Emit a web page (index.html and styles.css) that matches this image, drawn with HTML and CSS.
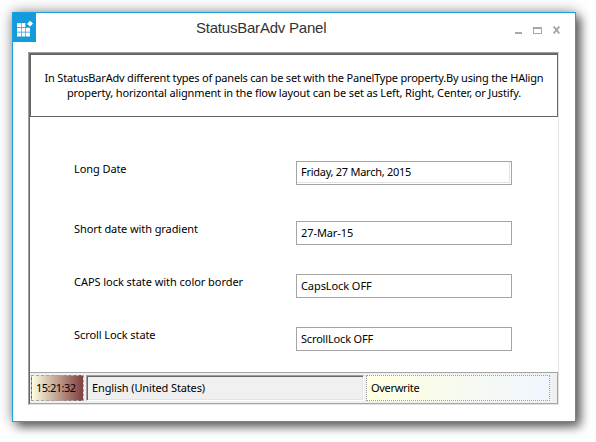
FILE: index.html
```html
<!DOCTYPE html>
<html lang="en">
<head>
<meta charset="utf-8">
<title>StatusBarAdv Panel</title>
<link rel="stylesheet" href="styles.css">
</head>
<body>
<main class="window">
  <header class="titlebar">
    <div class="app-icon">
      <svg width="23" height="29" viewBox="0 0 23 29" fill="#fff">
        <path d="M4 10h4v4H4zM8.600 10h3.800v4H8.600zM4 14.700h4v4H4zM8.600 14.700h3.800v4H8.600zM13 14.700h4v4h-4zM4 19.400h4v4H4zM8.600 19.400h3.800v4H8.600zM13 19.400h4v4h-4z"/>
        <path d="M17 7.700l3 2.700-2.700 3-3.300-2.400z"/>
      </svg>
    </div>
    <h1 class="title">StatusBarAdv Panel</h1>
    <svg class="controls" width="48" height="12" viewBox="0 0 48 12">
      <path d="M0 6h7v2H0z" fill="#a8a8a8"/>
      <path d="M18 1h9v7h-9zM19 3v4h7V3z" fill="#a8a8a8" fill-rule="evenodd"/>
      <path d="M38.700 0.500l5.600 7M44.300 0.500l-5.600 7" stroke="#a5a5a5" stroke-width="2"/>
    </svg>
  </header>
  <section class="panel">
    <div class="intro">
      <p class="line-one">In StatusBarAdv different types of panels can be set with the PanelType property.By using the HAlign</p>
      <p class="line-two">property, horizontal alignment in the flow layout can be set as Left, Right, Center, or Justify.</p>
    </div>
    <div class="form">
      <div class="row first"><span class="label">Long Date</span><div class="field inset"><span class="long-date">Friday, 27 March, 2015</span></div></div>
      <div class="row"><span class="label">Short date with gradient</span><div class="field"><span>27-Mar-15</span></div></div>
      <div class="row"><span class="label caps">CAPS lock state with color border</span><div class="field"><span>CapsLock OFF</span></div></div>
      <div class="row"><span class="label">Scroll Lock state</span><div class="field"><span class="scroll-lock">ScrollLock OFF</span></div></div>
    </div>
    <footer class="statusbar">
      <div class="cell time"><span>15:21:32</span></div>
      <div class="cell language"><span>English (United States)</span></div>
      <div class="cell mode"><span>Overwrite</span></div>
    </footer>
  </section>
</main>
</body>
</html>
```
FILE: styles.css
```css
* { box-sizing: border-box; }
body {
  margin: 0;
  padding: 12px;
  height: 442px;
  overflow: hidden;
  background: #fff;
  color: #000;
  font: 11px/15px "Noto Sans", "Open Sans", sans-serif;
}
p, h1 { margin: 0; }
.window {
  width: 564px;
  height: 410px;
  border: 1px solid #1ba1e2;
  background: #fff;
  box-shadow: 5px 5px 9px rgba(0,0,0,.5), 0 0 13px rgba(0,0,0,.42);
}
.titlebar {
  display: grid;
  grid-template-columns: 23px 1fr 63px;
  height: 39px;
}
.app-icon {
  height: 29px;
  background: #149bdb;
}
.title {
  padding: 6px 0 0 160px;
  font: 15px/18px "Liberation Sans", Arial, sans-serif;
  letter-spacing: -.22px;
  color: #333;
}
.controls { margin: 13px 0 0 3px; }
.panel {
  display: flex;
  flex-direction: column;
  width: 531px;
  height: 353px;
  margin-left: 15px;
  border: 1px solid #a0a0a0;
  border-right-color: #e3e3e3;
  border-bottom-color: #e3e3e3;
  box-shadow: inset 1px 1px #696969;
  padding: 1px 0 0 1px;
}
.intro {
  flex: none;
  height: 63px;
  padding-top: 15px;
  border: 1px solid #646464;
  text-align: center;
  white-space: nowrap;
}
.line-one { letter-spacing: -.2px; }
.line-two { letter-spacing: -.14px; }
.form {
  flex: 1;
  min-height: 0;
  padding: 44px 0 0 44px;
  letter-spacing: -.08px;
}
.caps { letter-spacing: -.05px; }
.row {
  display: grid;
  grid-template-columns: 222px 216px;
  height: 53px;
}
.row.first { height: 60px; }
.field {
  height: 24px;
  padding: 3px 4px;
  border: 1px solid #a5a5a5;
}
.inset { box-shadow: inset -1px -1px #fff, inset -2px -2px #e3e3e3; padding-top: 2px; }
.long-date { letter-spacing: -.27px; }
.scroll-lock { letter-spacing: -.17px; }
.statusbar {
  display: flex;
  flex: none;
  gap: 2px;
  height: 32px;
  padding: 2px 0 3px 1px;
  border: 1px solid #a5a5a5;
  border-left: 0;
  background: #f0f0f0;
}
.cell { height: 26px; padding: 4px; white-space: nowrap; }
.time {
  width: 53px;
  border: 1px dashed #a5a5a5;
  background: linear-gradient(90deg, #ffffe1, #803f3f);
  letter-spacing: -.5px;
}
.language {
  width: 278px;
  padding-left: 5px;
  border: 1px solid #a0a0a0;
  border-right-color: #fff;
  border-bottom-color: #fff;
  box-shadow: inset 1px 1px #696969, inset -1px -1px #e3e3e3;
  background: #f0f0f0;
  letter-spacing: -.13px;
}
.mode {
  width: 184px;
  border: 1px dotted #a0a0a0;
  background: linear-gradient(90deg, #ffffe0, #f0f6ff);
  letter-spacing: -.3px;
}
```
